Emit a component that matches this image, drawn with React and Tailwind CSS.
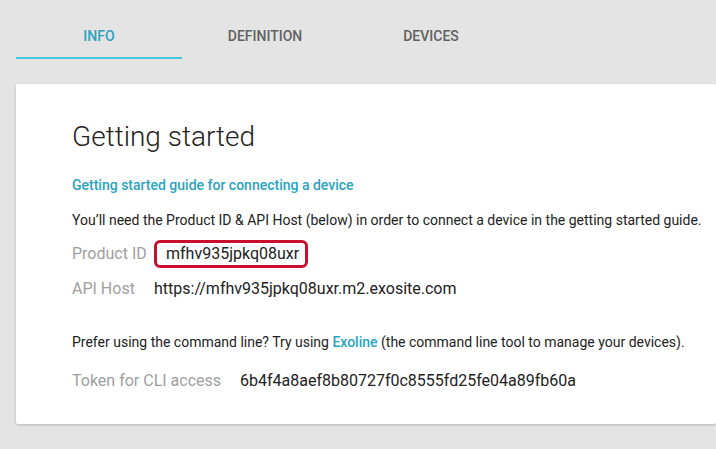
const tabs = ['Info', 'Definition', 'Devices'];

const App = () => {
  return (
    <div className="min-h-[449px] bg-[#e4e4e4] font-['Roboto',sans-serif] px-4 pb-6">
      <div className="flex">
        {tabs.map((tab, i) => (
          <div
            key={tab}
            className={
              'w-[166px] h-[59px] pt-[15px] flex items-center justify-center text-[14px] font-medium uppercase border-b-2 ' +
              (i === 0 ? 'text-[#2aa3bf] border-[#45c4de]' : 'text-[#616161] border-transparent')
            }
          >
            {tab}
          </div>
        ))}
      </div>

      <div className="mt-[25px] mr-[-16px] bg-white rounded-[2px] shadow-[0_1px_3px_rgba(0,0,0,0.2)] pl-14 pt-[36px] pb-[31px]">
        <h1 className="text-[28px] font-light text-[#222] leading-[34px]">Getting started</h1>

        <a className="block mt-[21px] text-[14px] font-medium text-[#2aa3bf] leading-[20px]">
          Getting started guide for connecting a device
        </a>

        <p className="mt-[15px] text-[14px] text-[#222] leading-[20px]">
          You’ll need the Product ID &amp; API Host (below) in order to connect a device in the getting started guide.
        </p>

        <div className="mt-[10px] flex items-center text-[16px] h-[28px]">
          <span className="w-[82px] text-[#9e9e9e]">Product ID</span>
          <span className="border-[3px] border-[#c8102e] rounded-[6px] pl-[9px] pr-[6px] h-[28px] flex items-center text-[#222]">
            mfhv935jpkq08uxr
          </span>
        </div>

        <div className="mt-[7px] flex items-center text-[16px] h-[28px]">
          <span className="w-[82px] text-[#9e9e9e]">API Host</span>
          <span className="text-[#222]">https://mfhv935jpkq08uxr.m2.exosite.com</span>
        </div>

        <p className="mt-[29px] text-[14px] text-[#222] leading-[20px]">
          Prefer using the command line? Try using{' '}
          <a className="text-[#2aa3bf] font-medium">Exoline</a> (the command line tool to manage your devices).
        </p>

        <div className="mt-[17px] flex items-center text-[16px] h-[24px]">
          <span className="w-[168px] text-[#9e9e9e]">Token for CLI access</span>
          <span className="text-[#222]">6b4f4a8aef8b80727f0c8555fd25fe04a89fb60a</span>
        </div>
      </div>
    </div>
  );
};

export default App;
